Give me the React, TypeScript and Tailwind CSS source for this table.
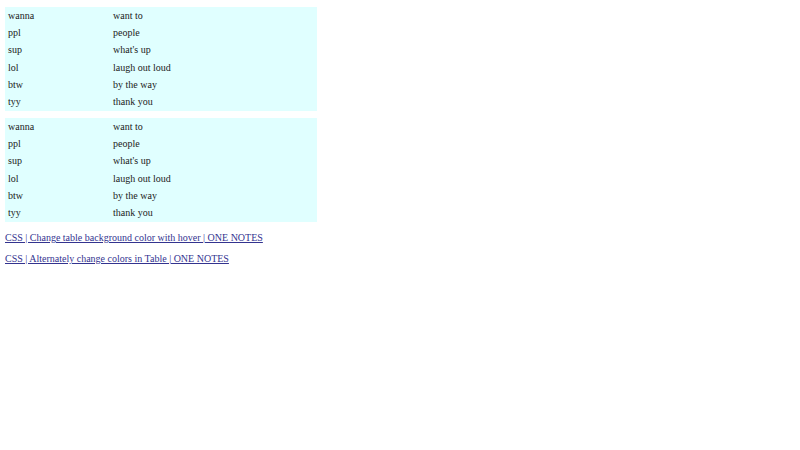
import React from "react";

const rows: [string, string][] = [
  ["wanna", "want to"],
  ["ppl", "people"],
  ["sup", "what's up"],
  ["lol", "laugh out loud"],
  ["btw", "by the way"],
  ["tyy", "thank you"],
];

function Table() {
  return (
    <div className="w-[312px] bg-[#e0ffff] grid grid-cols-[108px_1fr] auto-rows-[17.33px]">
      {rows.map(([a, b]) => (
        <React.Fragment key={a}>
          <div className="pl-[3px] flex items-center pb-[1px]">{a}</div>
          <div className="flex items-center pb-[1px]">{b}</div>
        </React.Fragment>
      ))}
    </div>
  );
}

export default function App() {
  return (
    <div
      className="w-[800px] h-[450px] bg-white text-[10px] text-[#222] pl-[5px] pt-[7px]"
      style={{ fontFamily: '"Liberation Serif", serif' }}
    >
      <div className="flex flex-col gap-[7px]">
        <Table />
        <Table />
      </div>
      <div className="flex flex-col gap-[9px] mt-[10px]">
        <a href="#" className="underline text-[#33338f] leading-[12px] w-fit">
          CSS | Change table background color with hover | ONE NOTES
        </a>
        <a href="#" className="underline text-[#33338f] leading-[12px] w-fit">
          CSS | Alternately change colors in Table | ONE NOTES
        </a>
      </div>
    </div>
  );
}
